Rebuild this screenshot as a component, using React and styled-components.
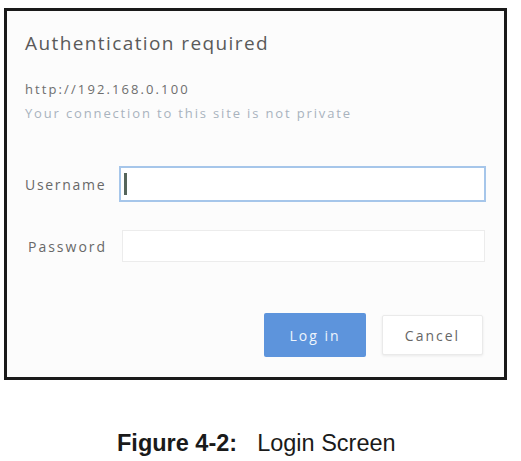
import React from "react";
import styled, { createGlobalStyle } from "styled-components";

const Global = createGlobalStyle`
  html, body { margin: 0; padding: 0; background: #ffffff; }
  body { font-family: "Liberation Sans", Arial, sans-serif; }
`;

const Page = styled.div`
  width: 521px;
  height: 461px;
  padding: 8px 0 0 4px;
  box-sizing: border-box;
  display: flex;
  flex-direction: column;
`;

const Frame = styled.div`
  width: 503px;
  height: 372px;
  box-sizing: border-box;
  border: 3px solid #1a1a1a;
  background: #fcfcfc;
  padding: 20px 18px 0 18px;
  display: flex;
  flex-direction: column;
  font-family: "Open Sans", "Liberation Sans", sans-serif;
`;

const Title = styled.div`
  font-size: 19px;
  letter-spacing: 1.4px;
  color: #5a5a5a;
  line-height: 24px;
`;

const Origin = styled.div`
  font-size: 13px;
  letter-spacing: 2.1px;
  color: #6e6e6e;
  margin-top: 25px;
  line-height: 18px;
`;

const Notice = styled.div`
  font-size: 13px;
  letter-spacing: 1.85px;
  color: #a9b3be;
  line-height: 18px;
  margin-top: 6px;
`;

const Form = styled.div`
  display: flex;
  flex-direction: column;
  gap: 28px;
  margin-top: 44px;
`;

const Row = styled.div`
  display: flex;
  align-items: center;
`;

const Label = styled.div`
  width: 94px;
  font-size: 14px;
  letter-spacing: ${(p) => p.$ls}px;
  color: #686868;
  padding-left: ${(p) => p.$pl || 0}px;
  box-sizing: border-box;
`;

const Field = styled.div`
  width: ${(p) => p.$w}px;
  height: ${(p) => p.$h}px;
  margin-left: ${(p) => p.$ml || 0}px;
  box-sizing: border-box;
  border: ${(p) => (p.$focus ? "2px solid #a6c6ea" : "1px solid #ececec")};
  background: #ffffff;
  display: flex;
  align-items: center;
  padding-left: 3px;
`;

const Caret = styled.div`
  width: 3px;
  height: 22px;
  background: #56655a;
`;

const Actions = styled.div`
  display: flex;
  justify-content: flex-end;
  align-items: center;
  gap: 16px;
  margin-top: auto;
  margin-bottom: 20px;
  padding-right: 3px;
`;

const Button = styled.div`
  width: ${(p) => p.$w}px;
  height: ${(p) => p.$h}px;
  box-sizing: border-box;
  display: flex;
  align-items: center;
  justify-content: center;
  font-size: 14px;
  letter-spacing: 2px;
  border-radius: 2px;
  background: ${(p) => (p.$primary ? "#5d94dc" : "#ffffff")};
  color: ${(p) => (p.$primary ? "#eef4fc" : "#666666")};
  border: ${(p) => (p.$primary ? "none" : "1px solid #eaeaea")};
  box-shadow: ${(p) => (p.$primary ? "none" : "0 1px 3px rgba(0,0,0,0.08)")};
`;

const Caption = styled.div`
  margin-top: 50px;
  margin-left: 113px;
  display: flex;
  gap: 20px;
  font-family: "Liberation Sans", Arial, sans-serif;
  font-size: 23.5px;
  color: #1a1a1a;
  line-height: 26px;
`;

const Bold = styled.span`
  font-weight: bold;
`;

export default function App() {
  return (
    <>
      <Global />
      <Page>
        <Frame>
          <Title>Authentication required</Title>
          <Origin>http://192.168.0.100</Origin>
          <Notice>Your connection to this site is not private</Notice>
          <Form>
            <Row>
              <Label $ls={1.7}>Username</Label>
              <Field $w={367} $h={36} $focus>
                <Caret />
              </Field>
            </Row>
            <Row>
              <Label $ls={2} $pl={3}>Password</Label>
              <Field $w={363} $h={32} $ml={3} />
            </Row>
          </Form>
          <Actions>
            <Button $primary $w={102} $h={44}>Log in</Button>
            <Button $w={101} $h={40}>Cancel</Button>
          </Actions>
        </Frame>
        <Caption>
          <Bold>Figure 4-2:</Bold>
          <span>Login Screen</span>
        </Caption>
      </Page>
    </>
  );
}
